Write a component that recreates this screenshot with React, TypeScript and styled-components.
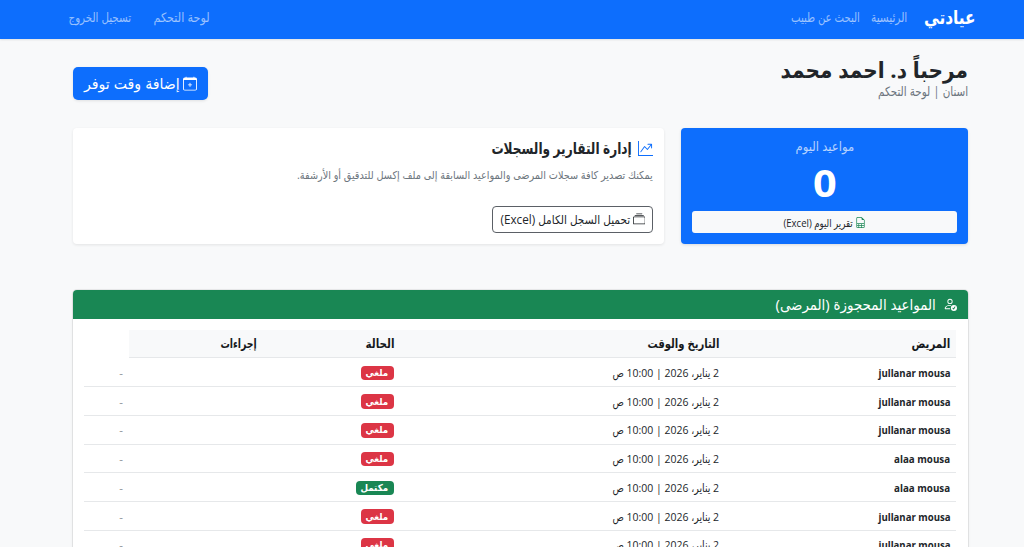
import React, { useLayoutEffect, useRef, useState } from "react";
import styled, { createGlobalStyle } from "styled-components";
import {
  BsCalendarPlus,
  BsCollection,
  BsFileEarmarkSpreadsheet,
  BsGraphUpArrow,
  BsPersonCheck,
} from "react-icons/bs";

const GlobalStyle = createGlobalStyle`
  *, *::before, *::after { box-sizing: border-box; }
  html, body { margin: 0; height: 100%; overflow: hidden; background: #f8f9fa; }
  body {
    font-family: "Open Sans", "DejaVu Sans Condensed", "DejaVu Sans", sans-serif;
    font-size: 11px;
    color: #212529;
  }
`;

const FitBox = styled.span`
  display: inline-block;
  white-space: nowrap;
  text-align: start;
  flex: none;
`;

const FitInner = styled.span<{ $shift: number }>`
  display: inline-block;
  position: relative;
  top: ${(p) => p.$shift}px;
  transform-origin: right center;
`;

/* Text condensed horizontally to a given width. */
function Fit({ w, shift = 0, children }: { w: number; shift?: number; children: React.ReactNode }) {
  const ref = useRef<HTMLSpanElement>(null);
  const [scale, setScale] = useState(1);
  useLayoutEffect(() => {
    if (ref.current && ref.current.offsetWidth) {
      setScale(w / ref.current.offsetWidth);
    }
  }, [w, children]);
  return (
    <FitBox style={{ width: w }}>
      <FitInner ref={ref} $shift={shift} style={{ transform: `scaleX(${scale})` }}>
        {children}
      </FitInner>
    </FitBox>
  );
}

const Page = styled.div`
  height: 547px;
  overflow: hidden;
  background: #f8f9fa;
`;

const Navbar = styled.nav`
  height: 39px;
  display: flex;
  align-items: center;
  justify-content: space-between;
  padding: 0 48px 5px 69px;
  background: #0d6efd;
  box-shadow: 0 1px 2px rgba(0, 0, 0, 0.1);
`;

const NavGroup = styled.div<{ $gap: number }>`
  display: flex;
  align-items: center;
  gap: ${(p) => p.$gap}px;
`;

const Brand = styled.a`
  margin-left: 6px;
  font-size: 19px;
  line-height: 30px;
  font-weight: 700;
  color: #fff;
`;

const NavLink = styled.a`
  font-size: 13px;
  line-height: 20px;
  color: rgba(255, 255, 255, 0.58);
`;

const Main = styled.main`
  width: 895px;
  margin: 0 56px 0 73px;
  padding-top: 17px;
`;

const Heading = styled.header`
  height: 72px;
  display: flex;
  justify-content: space-between;
`;

const Title = styled.h1`
  margin: 0;
  height: 27px;
  font-size: 22px;
  line-height: 27px;
  font-weight: 700;
`;

const Subtitle = styled.p`
  margin: 0;
  height: 17px;
  font-size: 13px;
  line-height: 17px;
  color: #6c757d;
`;

const AddButton = styled.button`
  display: flex;
  align-items: center;
  gap: 3px;
  width: 135px;
  height: 33px;
  margin-top: 11px;
  padding: 0 11px;
  border: 0;
  border-radius: 5px;
  background: #0d6efd;
  box-shadow: 0 1px 3px rgba(0, 0, 0, 0.1);
  color: #fff;
  font: inherit;
  font-size: 15px;
`;

const Cards = styled.section`
  display: grid;
  grid-template-columns: 287px 591px;
  gap: 17px;
  height: 116px;
`;

const TodayCard = styled.div`
  display: flex;
  flex-direction: column;
  align-items: center;
  padding: 9px 11px 11px;
  border-radius: 4px;
  background: #0d6efd;
  color: #fff;
  box-shadow: 0 1px 3px rgba(0, 0, 0, 0.12);
`;

const TodayLabel = styled.div`
  height: 18px;
  font-size: 13px;
  line-height: 18px;
  color: rgba(255, 255, 255, 0.7);
`;

const TodayCount = styled.div`
  flex: 1;
  font-size: 38px;
  line-height: 54px;
  font-weight: 700;
`;

const ReportButton = styled.button`
  display: flex;
  align-items: center;
  justify-content: center;
  gap: 2px;
  width: 100%;
  height: 22px;
  border: 0;
  border-radius: 3px;
  background: #f8f9fa;
  color: #212529;
  font: inherit;
  font-size: 11px;
  svg { color: #198754; }
`;

const ExportCard = styled.div`
  padding: 11px;
  border-radius: 4px;
  background: #fff;
  box-shadow: 0 1px 3px rgba(0, 0, 0, 0.09);
`;

const ExportTitle = styled.h2`
  display: flex;
  align-items: center;
  gap: 6px;
  margin: 0;
  height: 18px;
  font-size: 16px;
  line-height: 18px;
  font-weight: 700;
  svg { color: #0d6efd; }
`;

const ExportText = styled.p`
  margin: 9px 0 0;
  height: 17px;
  font-size: 11px;
  line-height: 17px;
  color: #6c757d;
`;

const ExportButton = styled.button`
  display: flex;
  align-items: center;
  gap: 2px;
  width: 161.5px;
  height: 27px;
  margin-top: 23px;
  padding: 0 7px;
  border: 1px solid #5b6066;
  border-radius: 4px;
  background: #fff;
  color: #212529;
  font: inherit;
  font-size: 12px;
`;

const TableCard = styled.section`
  margin-top: 46px;
  height: 320px;
  border-radius: 4px;
  background: #fff;
  box-shadow: 0 0 0 1px rgba(0, 0, 0, 0.06), 0 1px 3px rgba(0, 0, 0, 0.1);
`;

const TableHeader = styled.h2`
  display: flex;
  align-items: center;
  gap: 7px;
  margin: 0;
  height: 28.5px;
  padding: 0 11.5px 1px;
  border-radius: 4px 4px 0 0;
  background: #198754;
  color: #fff;
  font-size: 15px;
  font-weight: 400;
`;

const Table = styled.div`
  padding: 11px 12px 0 11px;
`;

const Row = styled.div`
  display: grid;
  grid-template-columns: 231px 325.5px 137px 134px 44.5px;
  height: 28.75px;
  line-height: 20px;
`;

const Cell = styled.div`
  display: flex;
  align-items: center;
  padding: 1.5px 5.5px 0;
  border-bottom: 1px solid #e6e8ea;
  font-size: 11.5px;
`;

const HeadCell = styled(Cell)`
  background: #f8f9fa;
  font-size: 12.5px;
  font-weight: 700;
  color: #16191c;
`;

const NameCell = styled(Cell)`
  font-weight: 700;
  font-size: 11px;
`;

const DashCell = styled(Cell)`
  color: #8b9299;
`;

const Badge = styled.span<{ $done: boolean }>`
  display: flex;
  align-items: center;
  height: 14.5px;
  padding: 0 5.5px;
  border-radius: 4px;
  background: ${(p) => (p.$done ? "#198754" : "#dc3545")};
  color: #fff;
  font-size: 9.5px;
  line-height: 14px;
  font-weight: 700;
`;

const columns = [
  { label: "المريض", w: 38.5 },
  { label: "التاريخ والوقت", w: 71.5 },
  { label: "الحالة", w: 28.5 },
  { label: "إجراءات", w: 36.5 },
];

const jullanar = { name: "jullanar mousa", w: 72.5 };
const alaa = { name: "alaa mousa", w: 56 };

const appointments = [
  { ...jullanar, done: false },
  { ...jullanar, done: false },
  { ...jullanar, done: false },
  { ...alaa, done: false },
  { ...alaa, done: true },
  { ...jullanar, done: false },
  { ...jullanar, done: false },
];

export default function App() {
  return (
    <Page dir="rtl" lang="ar">
      <GlobalStyle />
      <Navbar>
        <NavGroup $gap={11}>
          <Brand><Fit w={52}>عيادتي</Fit></Brand>
          <NavLink><Fit w={36}>الرئيسية</Fit></NavLink>
          <NavLink><Fit w={69}>البحث عن طبيب</Fit></NavLink>
        </NavGroup>
        <NavGroup $gap={22}>
          <NavLink><Fit w={56.5}>لوحة التحكم</Fit></NavLink>
          <NavLink><Fit w={62.5}>تسجيل الخروج</Fit></NavLink>
        </NavGroup>
      </Navbar>
      <Main>
        <Heading>
          <div>
            <Title><Fit w={187.5}>مرحباً د. احمد محمد</Fit></Title>
            <Subtitle><Fit w={90}>اسنان | لوحة التحكم</Fit></Subtitle>
          </div>
          <AddButton>
            <BsCalendarPlus size={15} />
            <Fit w={96} shift={-1}>إضافة وقت توفر</Fit>
          </AddButton>
        </Heading>
        <Cards>
          <TodayCard>
            <TodayLabel><Fit w={58.5}>مواعيد اليوم</Fit></TodayLabel>
            <TodayCount><Fit w={24}>0</Fit></TodayCount>
            <ReportButton>
              <BsFileEarmarkSpreadsheet size={11} />
              <Fit w={69.5}>تقرير اليوم (Excel)</Fit>
            </ReportButton>
          </TodayCard>
          <ExportCard>
            <ExportTitle>
              <BsGraphUpArrow size={15} />
              <Fit w={140.5}>إدارة التقارير والسجلات</Fit>
            </ExportTitle>
            <ExportText>
              <Fit w={356}>يمكنك تصدير كافة سجلات المرضى والمواعيد السابقة إلى ملف إكسل للتدقيق أو الأرشفة.</Fit>
            </ExportText>
            <ExportButton>
              <BsCollection size={12.5} />
              <Fit w={129.5}>تحميل السجل الكامل (Excel)</Fit>
            </ExportButton>
          </ExportCard>
        </Cards>
        <TableCard>
          <TableHeader>
            <BsPersonCheck size={14} />
            <Fit w={160.5}>المواعيد المحجوزة (المرضى)</Fit>
          </TableHeader>
          <Table>
            <Row>
              {columns.map((c) => (
                <HeadCell key={c.label}><Fit w={c.w}>{c.label}</Fit></HeadCell>
              ))}
            </Row>
            {appointments.map((a, i) => (
              <Row key={i}>
                <NameCell><Fit w={a.w}>{a.name}</Fit></NameCell>
                <Cell><Fit w={106.5}>2 يناير، 2026 | 10:00 ص</Fit></Cell>
                <Cell>
                  <Badge $done={a.done}>
                    <Fit w={a.done ? 27.5 : 22.5}>{a.done ? "مكتمل" : "ملغي"}</Fit>
                  </Badge>
                </Cell>
                <Cell />
                <DashCell><Fit w={4}>-</Fit></DashCell>
              </Row>
            ))}
          </Table>
        </TableCard>
      </Main>
    </Page>
  );
}
